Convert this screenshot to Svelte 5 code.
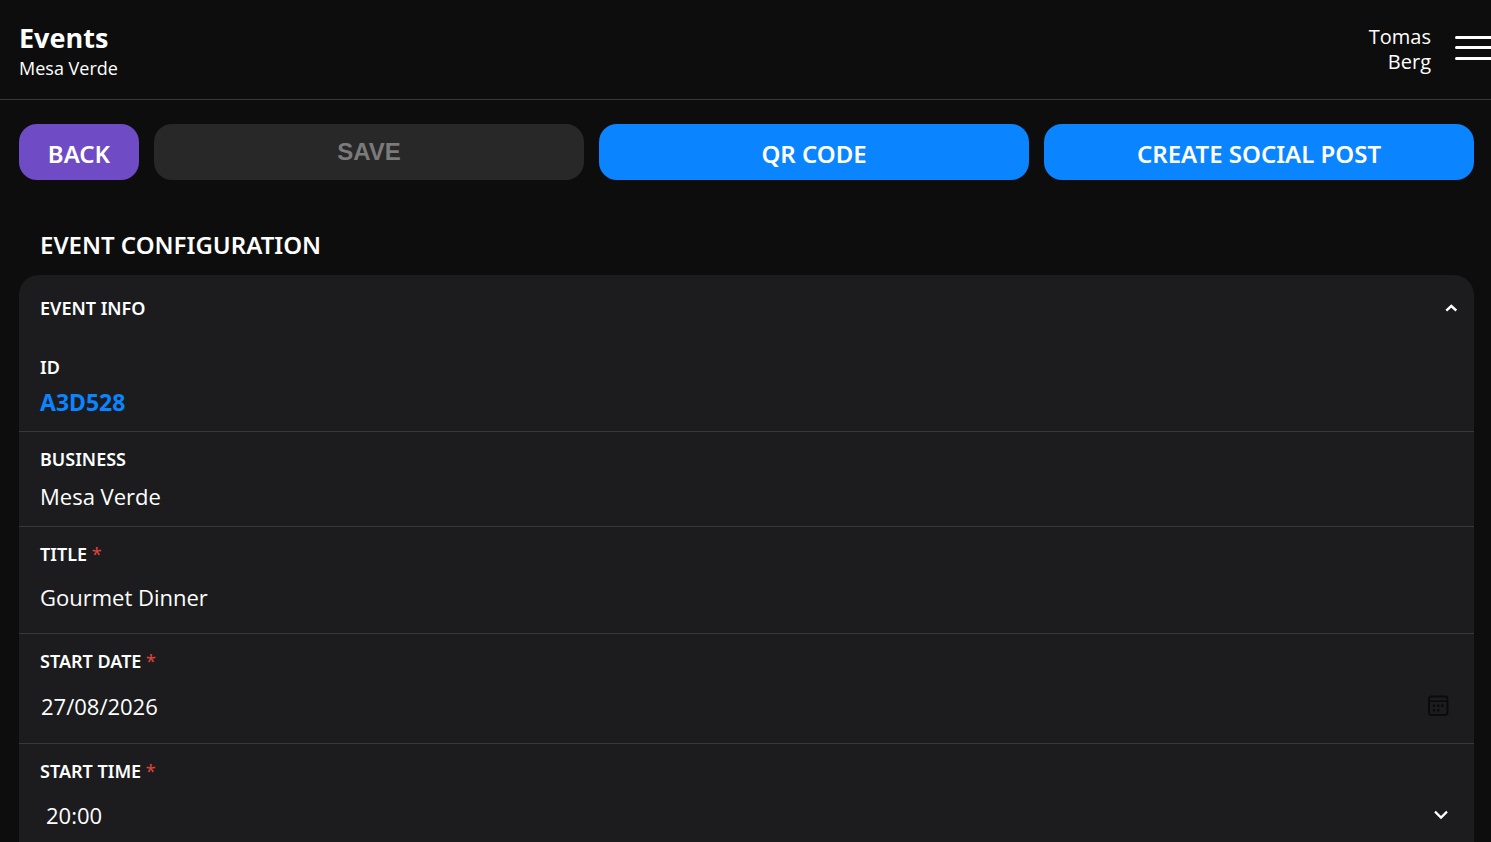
<script>
  let title = $state('Gourmet Dinner');
  let startDate = $state('27/08/2026');
  let startTime = $state('20:00');
  let open = $state(true);
  const times = ['19:00', '19:30', '20:00', '20:30', '21:00'];
</script>

<div class="page">
  <header>
    <div class="heading">
      <h1>Events</h1>
      <p>Mesa Verde</p>
    </div>
    <div class="account">
      <span class="user">Tomas Berg</span>
      <button class="menu" type="button" aria-label="Menu">
        <svg width="36" height="26" viewBox="0 0 36 26" aria-hidden="true">
          <path d="M1.5 2.5H36M1.5 12.5H36M1.5 23.5H36" stroke="#fff" stroke-width="3" stroke-linecap="round" />
        </svg>
      </button>
    </div>
  </header>

  <main>
    <div class="actions">
      <button class="back" type="button">BACK</button>
      <button class="save" type="button" disabled>SAVE</button>
      <button class="primary" type="button">QR CODE</button>
      <button class="primary" type="button">CREATE SOCIAL POST</button>
    </div>

    <h2>EVENT CONFIGURATION</h2>

    <section class="card">
      <button class="toggle" type="button" aria-expanded={open} onclick={() => (open = !open)}>
        <span>EVENT INFO</span>
        <svg class:closed={!open} width="12" height="8" viewBox="0 0 12 8" aria-hidden="true">
          <path d="M1.3 6.6 6.3 2l5 4.6" fill="none" stroke="#fff" stroke-width="2.4" />
        </svg>
      </button>

      {#if open}
        <div class="row id">
          <span class="label">ID</span>
          <span class="code">A3D528</span>
        </div>
        <div class="row business">
          <span class="label">BUSINESS</span>
          <span class="value">Mesa Verde</span>
        </div>
        <div class="row title">
          <label class="label" for="title">TITLE <span class="req">*</span></label>
          <input id="title" type="text" bind:value={title} />
        </div>
        <div class="row date">
          <label class="label" for="start-date">START DATE <span class="req">*</span></label>
          <div class="control">
            <input id="start-date" type="text" bind:value={startDate} />
            <button class="picker" type="button" aria-label="Choose date">
              <svg width="22" height="22" viewBox="0 0 22 22" aria-hidden="true">
                <rect x="2" y="1.5" width="18.5" height="18.5" rx="2.5" fill="none" stroke="#0b0b0c" stroke-width="1.8" />
                <path d="M2 6.2h18.5" stroke="#0b0b0c" stroke-width="1.6" />
                <path d="M5.8 9.6h2.4V12H5.8zM10 9.6h2.4V12H10zM14.2 9.6h2.4V12h-2.4zM5.8 14h2.4v2.4H5.8zM10 14h2.4v2.4H10z" fill="#0b0b0c" />
              </svg>
            </button>
          </div>
        </div>
        <div class="row time">
          <label class="label" for="start-time">START TIME <span class="req">*</span></label>
          <div class="control">
            <select id="start-time" bind:value={startTime}>
              {#each times as time}
                <option>{time}</option>
              {/each}
            </select>
            <svg class="chevron" width="14" height="10" viewBox="0 0 14 10" aria-hidden="true">
              <path d="M1 1.6 7 7.6l6-6" fill="none" stroke="#fff" stroke-width="2.2" />
            </svg>
          </div>
        </div>
      {/if}
    </section>
  </main>
</div>

<style>
  :global(body) {
    background: #0d0d0d;
  }
  .page {
    height: 100vh;
    overflow: hidden auto;
    scrollbar-width: none;
    color: #fff;
    font-family: 'Open Sans', 'Noto Sans', sans-serif;
  }
  * {
    box-sizing: border-box;
  }
  h1,
  h2,
  p {
    margin: 0;
  }
  button,
  input,
  select {
    margin: 0;
    padding: 0;
    border: 0;
    background: none;
    color: inherit;
    font-family: inherit;
  }
  button:not(:disabled) {
    cursor: pointer;
  }
  header {
    display: flex;
    justify-content: space-between;
    align-items: center;
    height: 100px;
    padding-left: 19px;
    border-bottom: 1px solid #38383a;
  }
  .heading {
    padding-top: 2px;
  }
  h1 {
    font-size: 27px;
    font-weight: 700;
    line-height: 34px;
  }
  p {
    font-size: 18px;
    line-height: 26px;
  }
  .account {
    display: flex;
    align-items: center;
    gap: 24px;
  }
  .user {
    width: 80px;
    padding-bottom: 2px;
    font-size: 20px;
    line-height: 25px;
    text-align: right;
  }
  .menu {
    display: flex;
    padding-bottom: 3px;
  }
  main {
    padding: 24px 17px 24px 19px;
  }
  .actions {
    display: grid;
    grid-template-columns: 120px 1fr 1fr 1fr;
    gap: 15px;
  }
  .actions button {
    height: 56px;
    padding-top: 2px;
    border-radius: 18px;
    font-family: 'Noto Sans', 'Open Sans', sans-serif;
    font-size: 24px;
    font-weight: 600;
  }
  .back {
    background: #6f4bc6;
  }
  .actions .save {
    padding: 0;
    background: #282828;
    color: #7b7b7b;
    font-family: 'Liberation Sans', Arial, sans-serif;
    font-weight: 700;
  }
  .primary {
    background: #0a84ff;
  }
  h2 {
    margin: 47px 21px 13px;
    font-family: 'Noto Sans', 'Open Sans', sans-serif;
    font-size: 24px;
    font-weight: 600;
    line-height: 35px;
  }
  .card {
    border-radius: 20px 20px 0 0;
    background: #1c1c1e;
  }
  .toggle {
    display: flex;
    justify-content: space-between;
    align-items: center;
    width: 100%;
    height: 66px;
    padding: 0 17px 0 21px;
    font-family: 'Noto Sans', 'Open Sans', sans-serif;
    font-size: 18px;
    font-weight: 600;
  }
  .closed {
    transform: rotate(180deg);
  }
  .row {
    display: flex;
    flex-direction: column;
    padding: 14px 21px 0;
    border-bottom: 1px solid #38383a;
  }
  .row.id {
    padding-top: 13px;
  }
  .label {
    font-family: 'Noto Sans', 'Open Sans', sans-serif;
    font-size: 18px;
    font-weight: 600;
    line-height: 26px;
  }
  .req {
    color: #e0443a;
    font-weight: 400;
  }
  .code {
    padding: 7px 0 14px;
    color: #0a84ff;
    font-family: 'Noto Sans', 'Open Sans', sans-serif;
    font-size: 23px;
    font-weight: 700;
    line-height: 30px;
  }
  .value {
    padding: 9px 0 15px;
    font-size: 22px;
    line-height: 30px;
  }
  input,
  select {
    width: 100%;
    font-size: 22px;
    outline: none;
  }
  input {
    height: 30px;
  }
  #title {
    margin: 15px 0 21px;
  }
  .control {
    display: flex;
    align-items: center;
  }
  .date .control {
    height: 69px;
    padding: 0 4px 5px 1px;
  }
  .picker {
    display: flex;
  }
  .time .control {
    height: 64px;
    padding: 0 5px 2px 6px;
  }
  select {
    height: 32px;
    appearance: none;
  }
  option {
    background: #1c1c1e;
  }
  .chevron {
    flex: none;
    pointer-events: none;
  }
</style>
